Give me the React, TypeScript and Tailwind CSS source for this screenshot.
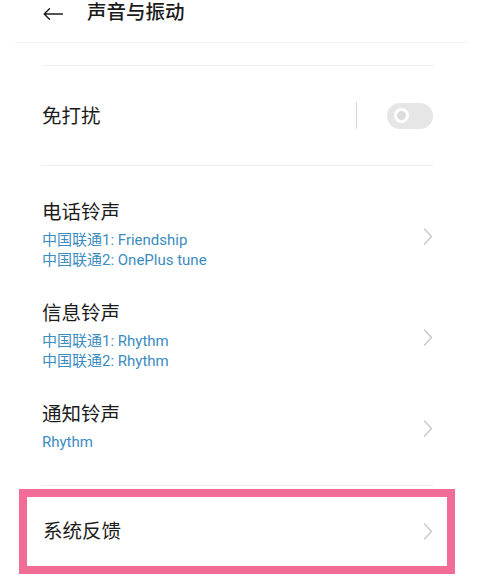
import React from "react";

const Chevron = () => (
  <svg width="10" height="17" viewBox="0 0 10 17" className="shrink-0">
    <path d="M1.5 1 L8.5 8.5 L1.5 16" fill="none" stroke="#c9c9c9" strokeWidth="1.4" strokeLinecap="round" strokeLinejoin="round" />
  </svg>
);

const RingRow = ({ title, subs }: { title: string; subs: string[] }) => (
  <div className="flex items-center justify-between">
    <div className="flex flex-col">
      <div className="text-[19.5px] leading-[20px] text-[#1c1c1c]">{title}</div>
      <div className="mt-[7px] flex flex-col">
        {subs.map((s) => (
          <div key={s} className="text-[15px] leading-[20px] text-[#3b8cc0]">
            {s}
          </div>
        ))}
      </div>
    </div>
    <Chevron />
  </div>
);

export default function App() {
  return (
    <div
      className="w-[483px] h-[583px] overflow-hidden bg-white"
      style={{ fontFamily: 'Roboto, "Noto Sans CJK SC", sans-serif' }}
    >
      {/* header */}
      <div className="mx-[15px] h-[43px] border-b border-[#f3f3f3] flex items-start pt-[3px]">
        <div className="ml-[28px] mt-[5px] w-[20px] h-[12px]">
          <svg width="20" height="12" viewBox="0 0 20 12">
            <path d="M19.5 6 H1.2 M6.5 0.8 L1.2 6 L6.5 11.2" fill="none" stroke="#1c1c1c" strokeWidth="1.4" strokeLinecap="round" strokeLinejoin="round" />
          </svg>
        </div>
        <div className="ml-[24px] text-[19.5px] leading-[20px] font-medium text-[#1a1a1a]">声音与振动</div>
      </div>

      <div className="ml-[42px] mr-[50px]">
        <div className="mt-[22px] border-t border-[#eeeeee]" />
        {/* DND row */}
        <div className="h-[100px] flex items-center justify-between border-b border-[#eeeeee]">
          <div className="text-[19.5px] leading-[20px] text-[#1c1c1c] mt-[2px]">免打扰</div>
          <div className="flex items-center">
            <div className="w-px h-[27px] bg-[#d9d9d9]" />
            <div className="ml-[30px] w-[46px] h-[26px] rounded-full bg-[#e6e6e6] flex items-center pl-[7px]">
              <div className="w-[15px] h-[15px] rounded-full border-[3px] border-white bg-[#dcdcdc]" />
            </div>
          </div>
        </div>

        <div className="pt-[37px] pb-[33px] flex flex-col gap-[34px] border-b border-[#eeeeee]">
          <RingRow title="电话铃声" subs={["中国联通1: Friendship", "中国联通2: OnePlus tune"]} />
          <RingRow title="信息铃声" subs={["中国联通1: Rhythm", "中国联通2: Rhythm"]} />
          <RingRow title="通知铃声" subs={["Rhythm"]} />
        </div>
      </div>

      {/* highlighted row */}
      <div className="mt-[3px] ml-[19px] mr-[28px] h-[85px] border-[8px] border-[#f26d95] bg-white flex items-center justify-between pl-[16px] pr-[14px]">
        <div className="text-[19.5px] leading-[20px] text-[#1c1c1c]">系统反馈</div>
        <Chevron />
      </div>
    </div>
  );
}
